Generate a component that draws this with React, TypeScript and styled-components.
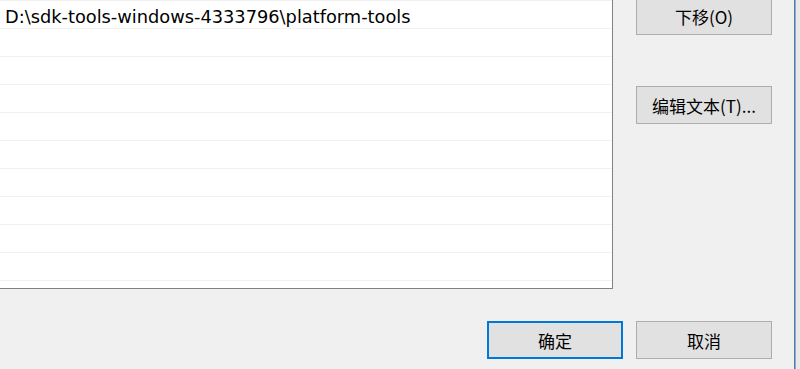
import React from 'react';
import styled, { createGlobalStyle } from 'styled-components';

const colors = {
  face: '#F0F0F0',
  white: '#FFFFFF',
  rowLine: '#F2F2F2',
  listBorder: '#828282',
  button: '#E1E1E1',
  buttonBorder: '#ADADAD',
  accent: '#0078D7',
  text: '#000000',
  frame: '#5A7FA6',
};

const GlobalStyle = createGlobalStyle`
  html, body {
    margin: 0;
    padding: 0;
    background: ${colors.face};
  }
  body {
    font-family: "Noto Sans CJK SC", "Noto Sans", sans-serif;
  }
`;

const Page = styled.div`
  width: 800px;
  height: 369px;
  display: flex;
  overflow: hidden;
  background-color: ${colors.face};
`;

const Dialog = styled.div`
  width: 794px;
  flex-shrink: 0;
  display: flex;
  flex-direction: column;
  border-right: 1px solid ${colors.frame};
`;

const Main = styled.div`
  display: flex;
  flex-direction: row;
`;

const PathList = styled.div`
  width: 613px;
  height: 316px;
  margin-top: -27px;
  box-sizing: border-box;
  background-color: ${colors.white};
  border-right: 1px solid ${colors.listBorder};
  border-bottom: 1px solid ${colors.listBorder};
  overflow: hidden;
`;

const PathRow = styled.div`
  height: 28px;
  box-sizing: border-box;
  border-bottom: 1px solid ${colors.rowLine};
  padding: 3px 0 0 5px;
  display: flex;
  align-items: center;
  font-family: "DejaVu Sans", "Noto Sans CJK SC", sans-serif;
  font-size: 17.8px;
  color: ${colors.text};
  white-space: nowrap;
`;

const SideColumn = styled.div`
  display: flex;
  flex-direction: column;
  padding-left: 23px;
`;

const Button = styled.button<{ $primary?: boolean; $gap?: number }>`
  width: 136px;
  height: 38px;
  box-sizing: border-box;
  margin: ${p => (p.$gap ?? 0)}px 0 0 0;
  padding: 0;
  background-color: ${colors.button};
  border: ${p => (p.$primary ? `2px solid ${colors.accent}` : `1px solid ${colors.buttonBorder}`)};
  color: ${colors.text};
  font-family: "Noto Sans CJK SC", "Noto Sans", sans-serif;
  font-size: 17px;
  line-height: 1;
  display: flex;
  align-items: center;
  justify-content: center;
  cursor: default;
`;

const Footer = styled.div`
  display: flex;
  justify-content: flex-end;
  gap: 13px;
  padding: 32px 22px 0 0;
`;

const Edge = styled.div`
  flex: 1;
  background-color: #E9E9E9;
  border-left: 1px solid #8FA9C6;
`;

const paths = [
  '',
  'D:\\sdk-tools-windows-4333796\\platform-tools',
  '', '', '', '', '', '', '', '', '', '',
];

export default function App() {
  return (
    <Page>
      <GlobalStyle />
      <Dialog>
        <Main>
          <PathList>
            {paths.map((p, i) => (
              <PathRow key={i}>{p}</PathRow>
            ))}
          </PathList>
          <SideColumn>
            <Button $gap={-3}>下移(O)</Button>
            <Button $gap={51}>编辑文本(T)...</Button>
          </SideColumn>
        </Main>
        <Footer>
          <Button $primary>确定</Button>
          <Button>取消</Button>
        </Footer>
      </Dialog>
      <Edge />
    </Page>
  );
}
